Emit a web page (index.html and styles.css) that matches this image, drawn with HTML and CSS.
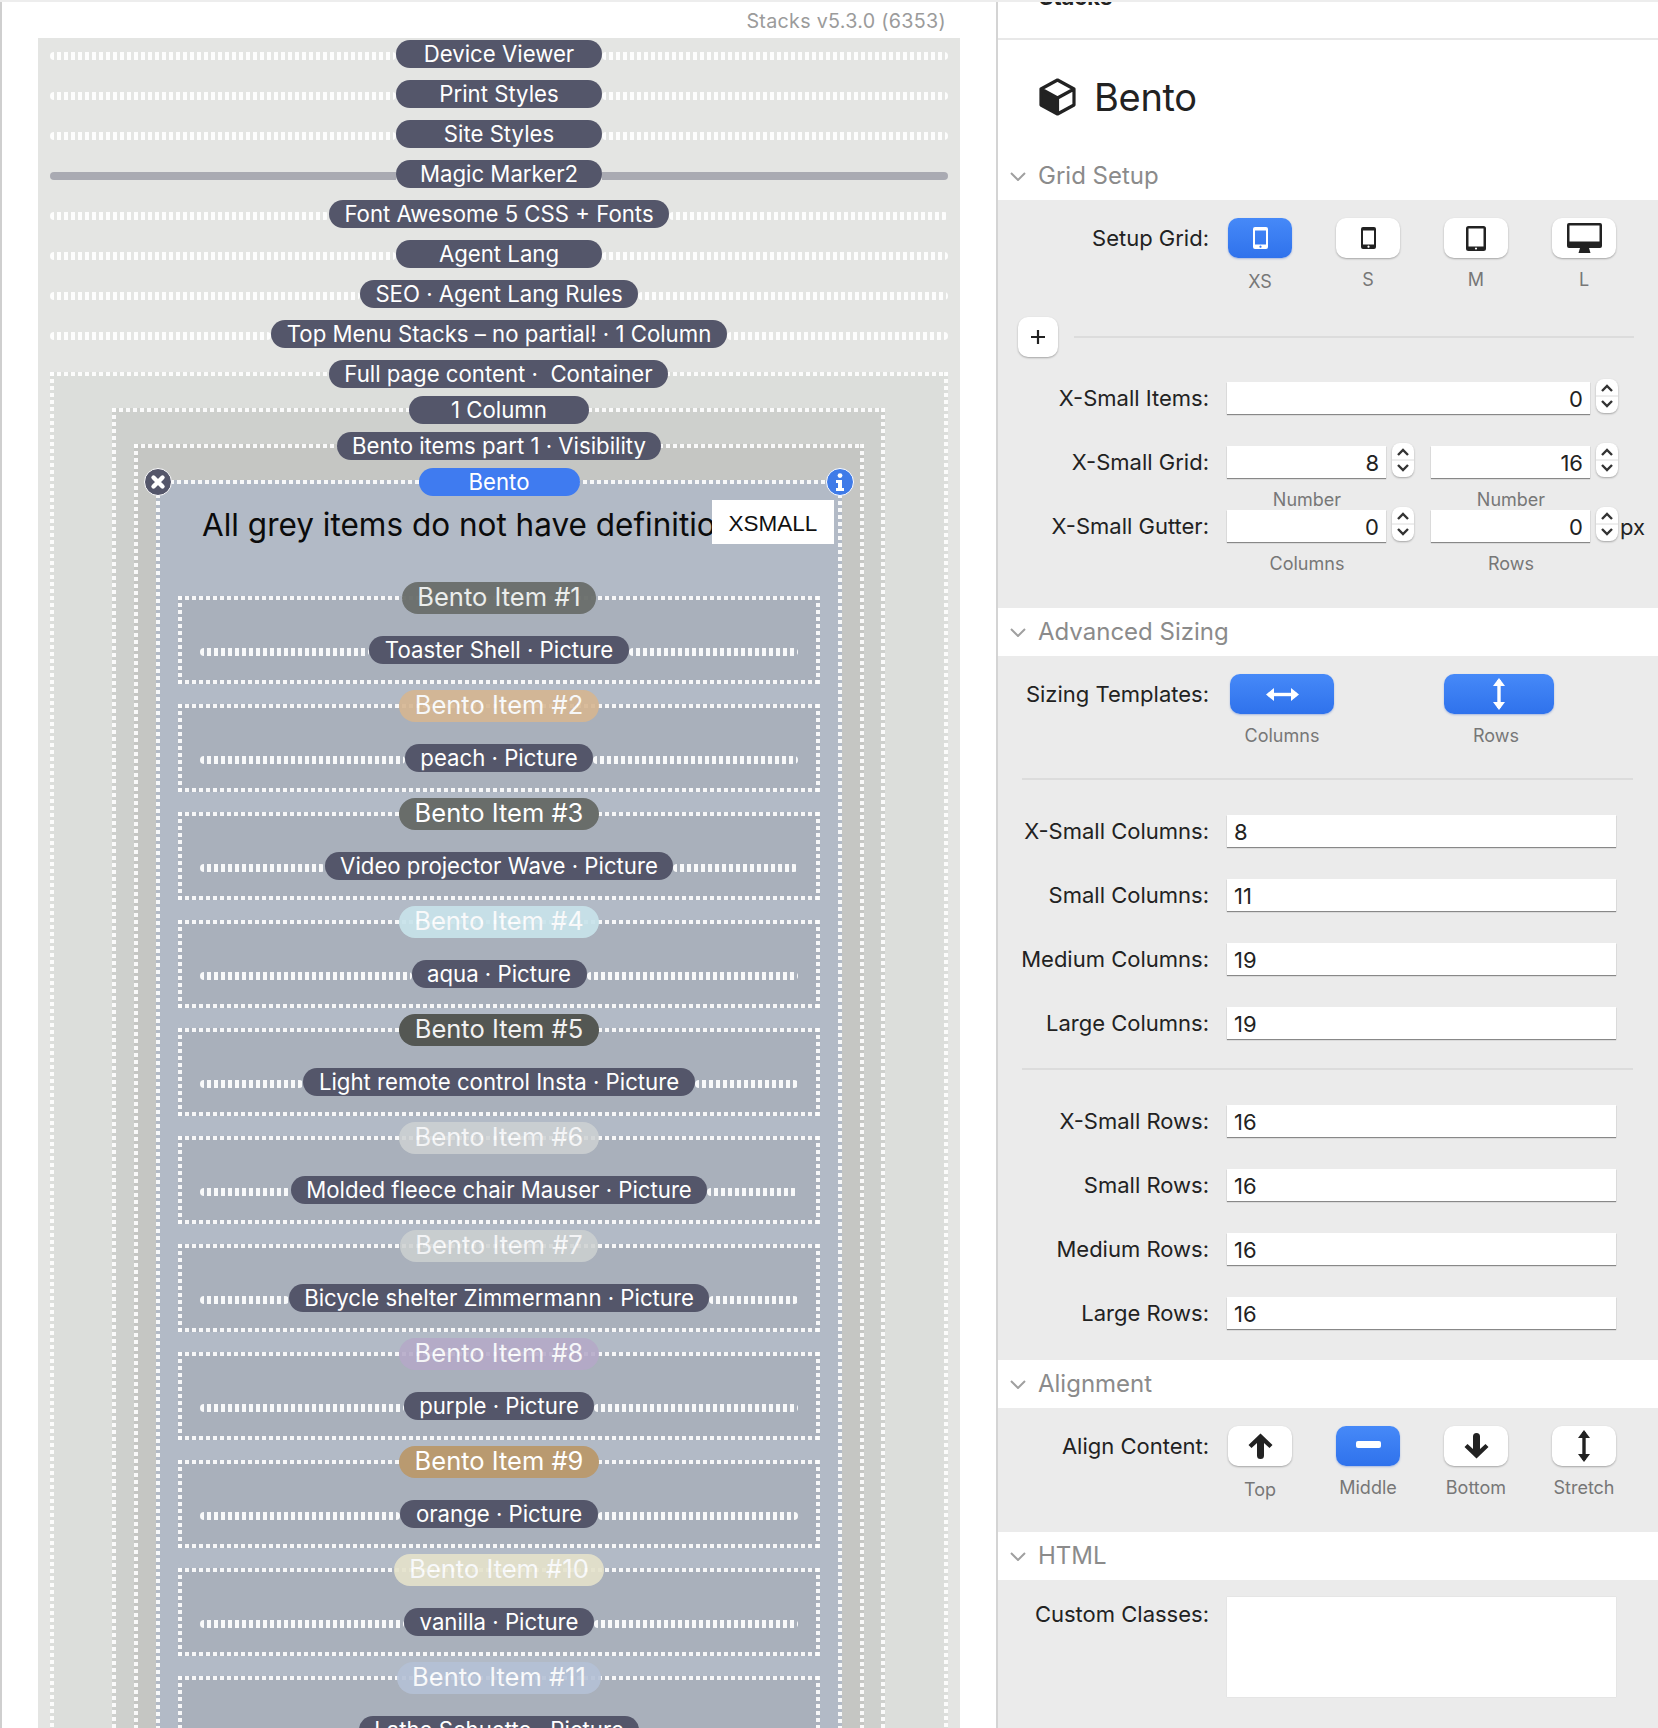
FILE: index.html
```html
<!DOCTYPE html>
<html lang="en">
<head>
<meta charset="utf-8">
<title>Stacks - Bento</title>
<link rel="stylesheet" href="styles.css">
</head>
<body>
<div class="app">
  <main class="left">
    <div class="version">Stacks v5.3.0 (6353)</div>
    <div class="canvas">
      <div class="row"><i class="dots"></i><span class="pill wide">Device Viewer</span><i class="dots"></i></div>
      <div class="row"><i class="dots"></i><span class="pill wide">Print Styles</span><i class="dots"></i></div>
      <div class="row"><i class="dots"></i><span class="pill wide">Site Styles</span><i class="dots"></i></div>
      <div class="row"><i class="bar"></i><span class="pill wide">Magic Marker2</span><i class="bar"></i></div>
      <div class="row"><i class="dots"></i><span class="pill wide">Font Awesome 5 CSS + Fonts</span><i class="dots"></i></div>
      <div class="row"><i class="dots"></i><span class="pill wide">Agent Lang</span><i class="dots"></i></div>
      <div class="row"><i class="dots"></i><span class="pill wide">SEO · Agent Lang Rules</span><i class="dots"></i></div>
      <div class="row"><i class="dots"></i><span class="pill wide">Top Menu Stacks – no partial! · 1 Column</span><i class="dots"></i></div>
      <section class="box box-page">
        <div class="head"><span class="pill">Full page content ·&nbsp; Container</span></div>
        <section class="box box-col">
          <div class="head"><span class="pill col-pill">1 Column</span></div>
          <section class="box box-part">
            <div class="head"><span class="pill">Bento items part 1 · Visibility</span></div>
            <section class="box box-bento">
              <svg class="corner corner-l" viewBox="0 0 28 28"><circle cx="14" cy="14" r="13.5" fill="#54566a" stroke="#fff" stroke-width="1"/><path d="M9.5 9.5l9 9M18.5 9.5l-9 9" stroke="#fff" stroke-width="4.4" stroke-linecap="round"/></svg>
              <svg class="corner corner-r" viewBox="0 0 28 28"><circle cx="14" cy="14" r="13.5" fill="#3f7be8" stroke="#fff" stroke-width="1"/><circle cx="14" cy="7.6" r="2.4" fill="#fff"/><path d="M10 12h6v8h2v3h-8v-3h2v-5h-2z" fill="#fff"/></svg>
              <div class="head"><span class="pill blue">Bento</span></div>
              <div class="lead"><h1 class="lead-text">All grey items do not have definitions</h1></div>
              <div class="badge">XSMALL</div>

              <article class="box item">
                <div class="head"><span class="pill big c1">Bento Item #1</span></div>
                <div class="row inner"><i class="dots"></i><span class="pill">Toaster Shell · Picture</span><i class="dots"></i></div>
              </article>
              <article class="box item">
                <div class="head"><span class="pill big c2">Bento Item #2</span></div>
                <div class="row inner"><i class="dots"></i><span class="pill">peach · Picture</span><i class="dots"></i></div>
              </article>
              <article class="box item">
                <div class="head"><span class="pill big c3">Bento Item #3</span></div>
                <div class="row inner"><i class="dots"></i><span class="pill">Video projector Wave · Picture</span><i class="dots"></i></div>
              </article>
              <article class="box item">
                <div class="head"><span class="pill big c4">Bento Item #4</span></div>
                <div class="row inner"><i class="dots"></i><span class="pill">aqua · Picture</span><i class="dots"></i></div>
              </article>
              <article class="box item">
                <div class="head"><span class="pill big c5">Bento Item #5</span></div>
                <div class="row inner"><i class="dots"></i><span class="pill">Light remote control Insta · Picture</span><i class="dots"></i></div>
              </article>
              <article class="box item">
                <div class="head"><span class="pill big c6">Bento Item #6</span></div>
                <div class="row inner"><i class="dots"></i><span class="pill">Molded fleece chair Mauser · Picture</span><i class="dots"></i></div>
              </article>
              <article class="box item">
                <div class="head"><span class="pill big c7">Bento Item #7</span></div>
                <div class="row inner"><i class="dots"></i><span class="pill">Bicycle shelter Zimmermann · Picture</span><i class="dots"></i></div>
              </article>
              <article class="box item">
                <div class="head"><span class="pill big c8">Bento Item #8</span></div>
                <div class="row inner"><i class="dots"></i><span class="pill">purple · Picture</span><i class="dots"></i></div>
              </article>
              <article class="box item">
                <div class="head"><span class="pill big c9">Bento Item #9</span></div>
                <div class="row inner"><i class="dots"></i><span class="pill">orange · Picture</span><i class="dots"></i></div>
              </article>
              <article class="box item">
                <div class="head"><span class="pill big c10">Bento Item #10</span></div>
                <div class="row inner"><i class="dots"></i><span class="pill">vanilla · Picture</span><i class="dots"></i></div>
              </article>
              <article class="box item">
                <div class="head"><span class="pill big c11">Bento Item #11</span></div>
                <div class="row inner"><i class="dots"></i><span class="pill">Lathe Schuette · Picture</span><i class="dots"></i></div>
              </article>
            </section>
          </section>
        </section>
      </section>
    </div>
  </main>

  <aside class="right">
    <div class="topbar"><span class="topbar-title">Stacks</span></div>
    <div class="title">
      <svg class="cube" viewBox="0 0 37 38"><path d="M2 11L18.5 20V36L2 27Z" fill="#222"/><path d="M18.5 2L35 11V27L18.5 36L2 27V11ZM2 11L18.5 20L35 11M18.5 20V36" fill="none" stroke="#222" stroke-width="3.2" stroke-linejoin="round"/></svg>
      <span>Bento</span>
    </div>

    <div class="sec-head first"><svg class="chev" viewBox="0 0 16 9"><path d="M1 1l7 7 7-7" fill="none" stroke="#a0a0a0" stroke-width="2"/></svg>Grid Setup</div>
    <div class="sec-body grid-setup">
      <div class="frow">
        <label class="lbl">Setup Grid:</label>
        <div class="btns">
          <div class="cell"><div class="btn on"><svg class="ic-phone" viewBox="0 0 15 22"><path fill-rule="evenodd" d="M2 0h11a2 2 0 0 1 2 2v18a2 2 0 0 1-2 2H2a2 2 0 0 1-2-2V2a2 2 0 0 1 2-2zM2 3.5v14h11v-14zM7.5 18.6a1.1 1.1 0 1 0 .01 0z" fill="#fff"/></svg></div><span class="cap cap-low">XS</span></div>
          <div class="cell"><div class="btn"><svg class="ic-phone" viewBox="0 0 15 22"><path fill-rule="evenodd" d="M2 0h11a2 2 0 0 1 2 2v18a2 2 0 0 1-2 2H2a2 2 0 0 1-2-2V2a2 2 0 0 1 2-2zM2 3.5v14h11v-14zM7.5 18.6a1.1 1.1 0 1 0 .01 0z" fill="#222"/></svg></div><span class="cap">S</span></div>
          <div class="cell"><div class="btn"><svg class="ic-tablet" viewBox="0 0 20 25"><path fill-rule="evenodd" d="M2.5 0h15A2.5 2.5 0 0 1 20 2.500v20a2.500 2.500 0 0 1-2.500 2.500h-15A2.500 2.500 0 0 1 0 22.500v-20A2.500 2.500 0 0 1 2.500 0zM2.500 2.500v18h15v-18zM10 21.400a1.100 1.100 0 1 0 .01 0z" fill="#222"/></svg></div><span class="cap">M</span></div>
          <div class="cell"><div class="btn"><svg class="ic-desk" viewBox="0 0 35 30"><path fill-rule="evenodd" d="M2 0h31a2 2 0 0 1 2 2v21a2 2 0 0 1-2 2H2a2 2 0 0 1-2-2V2a2 2 0 0 1 2-2zM2.500 2.500v16h30v-16z" fill="#222"/><path d="M13 25h9l1.500 5h-12z" fill="#222"/></svg></div><span class="cap">L</span></div>
        </div>
      </div>
      <div class="plus-row">
        <div class="plus"><svg viewBox="0 0 16 16"><path d="M8 1v14M1 8h14" stroke="#222" stroke-width="2.200"/></svg></div>
        <div class="rule"></div>
      </div>
      <div class="frow f-items">
        <label class="lbl">X-Small Items:</label>
        <div class="field num grow">0</div>
        <div class="stepper"><svg viewBox="0 0 22 34"><path d="M6 12l5-5 5 5M6 22l5 5 5-5" fill="none" stroke="#333" stroke-width="2.400"/><path d="M0 17h22" stroke="#dcdcdc"/></svg></div>
      </div>
      <div class="frow f-grid">
        <label class="lbl">X-Small Grid:</label>
        <div class="pair">
          <div class="pair-in"><div class="field num half">8</div><div class="stepper"><svg viewBox="0 0 22 34"><path d="M6 12l5-5 5 5M6 22l5 5 5-5" fill="none" stroke="#333" stroke-width="2.400"/><path d="M0 17h22" stroke="#dcdcdc"/></svg></div></div>
          <div class="pair-in"><div class="field num half">16</div><div class="stepper"><svg viewBox="0 0 22 34"><path d="M6 12l5-5 5 5M6 22l5 5 5-5" fill="none" stroke="#333" stroke-width="2.400"/><path d="M0 17h22" stroke="#dcdcdc"/></svg></div></div>
        </div>
      </div>
      <div class="sub-caps tight"><span>Number</span><span>Number</span></div>
      <div class="frow f-gutter">
        <label class="lbl">X-Small Gutter:</label>
        <div class="pair">
          <div class="pair-in"><div class="field num half">0</div><div class="stepper"><svg viewBox="0 0 22 34"><path d="M6 12l5-5 5 5M6 22l5 5 5-5" fill="none" stroke="#333" stroke-width="2.400"/><path d="M0 17h22" stroke="#dcdcdc"/></svg></div></div>
          <div class="pair-in"><div class="field num half">0</div><div class="stepper"><svg viewBox="0 0 22 34"><path d="M6 12l5-5 5 5M6 22l5 5 5-5" fill="none" stroke="#333" stroke-width="2.400"/><path d="M0 17h22" stroke="#dcdcdc"/></svg></div><span class="unit">px</span></div>
        </div>
      </div>
      <div class="sub-caps"><span>Columns</span><span>Rows</span></div>
    </div>

    <div class="sec-head"><svg class="chev" viewBox="0 0 16 9"><path d="M1 1l7 7 7-7" fill="none" stroke="#a0a0a0" stroke-width="2"/></svg>Advanced Sizing</div>
    <div class="sec-body sizing">
      <div class="frow">
        <label class="lbl">Sizing Templates:</label>
        <div class="tpls">
          <div class="tpl tpl-a"><div class="btn on"><svg class="ic-h" viewBox="0 0 33 13"><path d="M2 6.500h29" stroke="#fff" stroke-width="3.400"/><path d="M0 6.500L8 0v13zM33 6.500L25 0v13z" fill="#fff"/></svg></div><span class="cap">Columns</span></div>
          <div class="tpl tpl-b"><div class="btn on"><svg class="ic-v" viewBox="0 0 12 32"><path d="M6 2v28" stroke="#fff" stroke-width="3.400"/><path d="M6 0l6 8H0zM6 32l6-8H0z" fill="#fff"/></svg></div><span class="cap cap-shift">Rows</span></div>
        </div>
      </div>
      <div class="divider d1"></div>
      <div class="frow f-list f-after"><label class="lbl">X-Small Columns:</label><div class="field grow">8</div></div>
      <div class="frow f-list"><label class="lbl">Small Columns:</label><div class="field grow">11</div></div>
      <div class="frow f-list"><label class="lbl">Medium Columns:</label><div class="field grow">19</div></div>
      <div class="frow f-list"><label class="lbl">Large Columns:</label><div class="field grow">19</div></div>
      <div class="divider d2"></div>
      <div class="frow f-first"><label class="lbl">X-Small Rows:</label><div class="field grow">16</div></div>
      <div class="frow f-list"><label class="lbl">Small Rows:</label><div class="field grow">16</div></div>
      <div class="frow f-list"><label class="lbl">Medium Rows:</label><div class="field grow">16</div></div>
      <div class="frow f-list"><label class="lbl">Large Rows:</label><div class="field grow">16</div></div>
    </div>

    <div class="sec-head"><svg class="chev" viewBox="0 0 16 9"><path d="M1 1l7 7 7-7" fill="none" stroke="#a0a0a0" stroke-width="2"/></svg>Alignment</div>
    <div class="sec-body align">
      <div class="frow">
        <label class="lbl">Align Content:</label>
        <div class="btns">
          <div class="cell"><div class="btn"><svg class="ic-arrow" viewBox="0 0 27 26"><path d="M1.500 12L13.500 .5 25.500 12 22.500 15 17 10V22.500a3.500 3.500 0 0 1-7 0V10L4.500 15Z" fill="#222"/></svg></div><span class="cap cap-low">Top</span></div>
          <div class="cell"><div class="btn on"><svg class="ic-mid" viewBox="0 0 25 7"><rect width="25" height="7" rx="2" fill="#fff"/></svg></div><span class="cap">Middle</span></div>
          <div class="cell"><div class="btn"><svg class="ic-arrow" viewBox="0 0 27 26"><path d="M1.500 14L13.500 25.500 25.500 14 22.500 11 17 16V3.500a3.500 3.500 0 0 0-7 0V16L4.500 11Z" fill="#222"/></svg></div><span class="cap">Bottom</span></div>
          <div class="cell"><div class="btn"><svg class="ic-v" viewBox="0 0 12 32"><path d="M6 2v28" stroke="#222" stroke-width="3.400"/><path d="M6 0l6 8H0zM6 32l6-8H0z" fill="#222"/></svg></div><span class="cap">Stretch</span></div>
        </div>
      </div>
    </div>

    <div class="sec-head"><svg class="chev" viewBox="0 0 16 9"><path d="M1 1l7 7 7-7" fill="none" stroke="#a0a0a0" stroke-width="2"/></svg>HTML</div>
    <div class="sec-body html">
      <div class="frow">
        <label class="lbl lbl-top">Custom Classes:</label>
        <div class="area"></div>
      </div>
    </div>
  </aside>
</div>
</body>
</html>
```
FILE: styles.css
```css
* { box-sizing: border-box; }
html, body { margin: 0; padding: 0; background: #fff; }
body { font-family: Inter, "Noto Sans", sans-serif; color: #222; }

.app { display: flex; width: 1658px; height: 1728px; overflow: hidden; border-top: 2px solid #ededed; }

/* ---------- left: page canvas ---------- */
.left { width: 998px; flex: none; border-left: 2px solid #cfcfcf; border-right: 2px solid #d4d4d4; display: flex; flex-direction: column; overflow: hidden; }
.version { height: 36px; flex: none; padding: 7px 50px 0 0; text-align: right; font-size: 19.700px; line-height: 24px; color: #9b9b9b; letter-spacing: .3px; }
.canvas { width: 922px; margin-left: 36px; padding: 2px 12px 0; background: #e4e5e3; display: flex; flex-direction: column; gap: 12px; flex: 1; }

.row { display: flex; align-items: center; height: 28px; flex: none; }
.dots { flex: 1; height: 8px; margin-top: 4px; border-radius: 4px; background: repeating-linear-gradient(90deg, rgba(255,255,255,.92) 0 4px, transparent 4px 7px); }
.bar { flex: 1; height: 8px; margin-top: 4px; background: #a9aab2; }
.bar:first-child { border-radius: 4px 0 0 4px; }
.bar:last-child { border-radius: 0 4px 4px 0; }

.pill { display: inline-flex; align-items: center; justify-content: center; flex: none; height: 28px; padding: 0 15.500px; border-radius: 14px; background: #54566a; color: #fff; font-size: 22.200px; line-height: 28px; white-space: nowrap; }
.wide { min-width: 206px; }
.col-pill { min-width: 180px; }
.blue { background: #3f7bf0; min-width: 161px; }
.big { height: 32px; border-radius: 16px; font-size: 25.500px; padding-bottom: 2px; }

.c1 { background: #6b6f6c; opacity: .96; color: #eef0ee; }
.c2 { background: #d6b691; opacity: .9; }
.c3 { background: #696d6a; }
.c4 { background: #c8e3ea; opacity: .92; }
.c5 { background: #545753; color: #f2f2f2; }
.c6 { background: #ced2d3; opacity: .85; }
.c7 { background: #cdd1d1; opacity: .85; }
.c8 { background: #b5a9c8; opacity: .88; }
.c9 { background: #b99a70; }
.c10 { background: #e5e2cb; opacity: .9; }
.c11 { background: #b5c1d6; opacity: .9; }

/* nested dotted containers */
.box {
  display: flow-root;
  position: relative;
  flex: none;
  background-image:
    repeating-linear-gradient(90deg, rgba(255,255,255,.9) 0 4px, transparent 4px 7px),
    repeating-linear-gradient(90deg, rgba(255,255,255,.9) 0 4px, transparent 4px 7px),
    repeating-linear-gradient(180deg, rgba(255,255,255,.9) 0 4px, transparent 4px 7px),
    repeating-linear-gradient(180deg, rgba(255,255,255,.9) 0 4px, transparent 4px 7px);
  background-size: 100% 4px, 100% 4px, 4px 100%, 4px 100%;
  background-position: left top, left bottom, left top, right top;
  background-repeat: no-repeat;
}
.head { display: flex; justify-content: center; margin-top: -12px; position: relative; }

.box-page { margin-top: 12px; padding: 0 63px 0 62px; background-color: #dcdedb; }
.box-col { margin-top: 20px; padding: 0 21px 0 22px; background-color: #ced0cd; }
.box-part { margin-top: 20px; padding: 0 22px; background-color: #c5c6c3; }
.box-bento { margin-top: 20px; padding: 0 22px; background-color: #b2bac6; }

.corner { position: absolute; top: -12px; width: 28px; height: 28px; z-index: 2; }
.corner-l { left: -12px; }
.corner-r { right: -12px; }

.lead { height: 100px; overflow: hidden; margin: 0 -2px; }
.lead-text { margin: 0; padding-top: 9px; padding-left: 26px; font-size: 31.500px; line-height: 40px; font-weight: 400; color: #0b0b0b; white-space: nowrap; }
.badge { position: absolute; top: 20px; right: 8px; width: 122px; height: 44px; background: #fff; color: #111; font-family: "Liberation Sans", Arial, sans-serif; font-size: 22.500px; line-height: 48px; text-align: center; }

.item { padding: 0 22px 20px; margin-bottom: 20px; background-color: #a9b0bb; }
.item .head { margin-top: -14px; }
.inner { margin-top: 22px; }

/* ---------- right: inspector ---------- */
.right { flex: 1; min-width: 0; display: flex; flex-direction: column; background: #fff; font-family: Inter, "Noto Sans", sans-serif; }
.topbar { height: 38px; flex: none; border-bottom: 2px solid #e8e8e8; padding-left: 41px; overflow: hidden; }
.topbar-title { display: block; margin-top: -17px; font-size: 22px; line-height: 24px; font-weight: 700; color: #222; }
.title { height: 112px; flex: none; display: flex; align-items: center; padding: 2px 0 0 41px; font-size: 38px; color: #222; letter-spacing: -.3px; }
.cube { width: 37px; height: 38px; margin-right: 18px; }

.sec-head { height: 48px; flex: none; display: flex; align-items: center; font-size: 24px; color: #8b8b8b; padding: 0 0 2px 12px; }
.chev { width: 16px; height: 9px; margin: 3px 12px 0 0; }
.sec-body { background: #ebebeb; flex: none; }

.frow { display: flex; align-items: flex-start; }
.lbl { width: 211px; flex: none; text-align: right; font-size: 22px; line-height: 40px; color: #222; white-space: nowrap; margin-right: 19px; }

.grid-setup { height: 408px; padding-top: 18px; }
.btns { display: grid; grid-template-columns: repeat(4, 64px); column-gap: 44px; }
.cell { display: flex; flex-direction: column; align-items: center; width: 64px; }
.btn { width: 100%; height: 40px; border-radius: 10px; background: #fff; box-shadow: 0 1px 2px rgba(0,0,0,.3); display: flex; align-items: center; justify-content: center; }
.btn.on { background: linear-gradient(#4689f8, #2f72ec); box-shadow: 0 1px 2px rgba(40,90,200,.35); }
.cap { font-size: 18px; line-height: 24px; color: #777; margin-top: 10px; white-space: nowrap; }
.cap-low { margin-top: 12px; }

.ic-phone { width: 15px; height: 22px; }
.ic-tablet { width: 20px; height: 25px; }
.ic-desk { width: 35px; height: 30px; }
.ic-h { width: 33px; height: 13px; }
.ic-v { width: 12px; height: 32px; }
.ic-arrow { width: 27px; height: 26px; }
.ic-mid { width: 25px; height: 7px; margin-top: -4px; }

.plus-row { display: flex; align-items: center; margin-top: 23px; padding-left: 20px; padding-right: 24px; }
.plus { width: 40px; height: 40px; border-radius: 10px; background: #fff; box-shadow: 0 1px 2px rgba(0,0,0,.3); display: flex; align-items: center; justify-content: center; flex: none; }
.plus svg { width: 16px; height: 16px; }
.rule { flex: 1; height: 2px; background: #dcdcdc; margin-left: 16px; }

.field { height: 32px; margin-left: -1px; background: #fff; box-shadow: 0 1px 1px rgba(0,0,0,.42); font-size: 22px; line-height: 34px; padding: 0 7px; color: #222; flex: none; }
.num { text-align: right; }
.grow { width: 389px; }
.f-items { margin-top: 25px; }
.f-items .lbl, .f-grid .lbl, .f-gutter .lbl, .f-list .lbl, .f-first .lbl { line-height: 32px; }
.f-items .field { width: 363px; }
.stepper { width: 22px; height: 34px; margin: -3px 0 0 6px; border-radius: 8px; background: #fff; box-shadow: 0 1px 2px rgba(0,0,0,.3); flex: none; }
.stepper svg { display: block; width: 22px; height: 34px; }
.f-grid { margin-top: 32px; }
.f-gutter { margin-top: 0; }
.pair { display: flex; gap: 18px; }
.pair-in { display: flex; align-items: flex-start; position: relative; }
.half { width: 159px; }
.unit { position: absolute; left: 188px; top: 0; font-size: 22px; line-height: 34px; color: #222; }
.sub-caps { display: flex; padding-left: 230px; font-size: 18px; line-height: 24px; color: #777; height: 24px; margin-top: 10px; }
.sub-caps span { width: 158px; text-align: center; margin-right: 46px; }
.sub-caps.tight { margin-top: 10px; height: 22px; line-height: 24px; }

.sizing { height: 704px; padding-top: 18px; }
.tpls { display: flex; }
.tpl { display: flex; flex-direction: column; align-items: center; }
.tpl-a { width: 104px; margin-left: 2px; }
.tpl-b { width: 110px; margin-left: 110px; }
.tpl .cap { margin-top: 10px; }
.cap-shift { margin-right: 6px; }
.divider { height: 2px; background: #dcdcdc; margin-left: 24px; margin-right: 25px; }
.d1 { margin-top: 30px; }
.d2 { margin-top: 29px; }
.f-list { margin-top: 32px; }
.f-after { margin-top: 35px; }
.f-first { margin-top: 35px; }

.align { height: 124px; padding-top: 18px; }
.html { flex: 1; padding-top: 17px; }
.lbl-top { line-height: 32px; padding-top: 1px; }
.area { width: 389px; height: 100px; margin-left: -1px; background: #fff; box-shadow: 0 0 1px rgba(0,0,0,.15); }
```
